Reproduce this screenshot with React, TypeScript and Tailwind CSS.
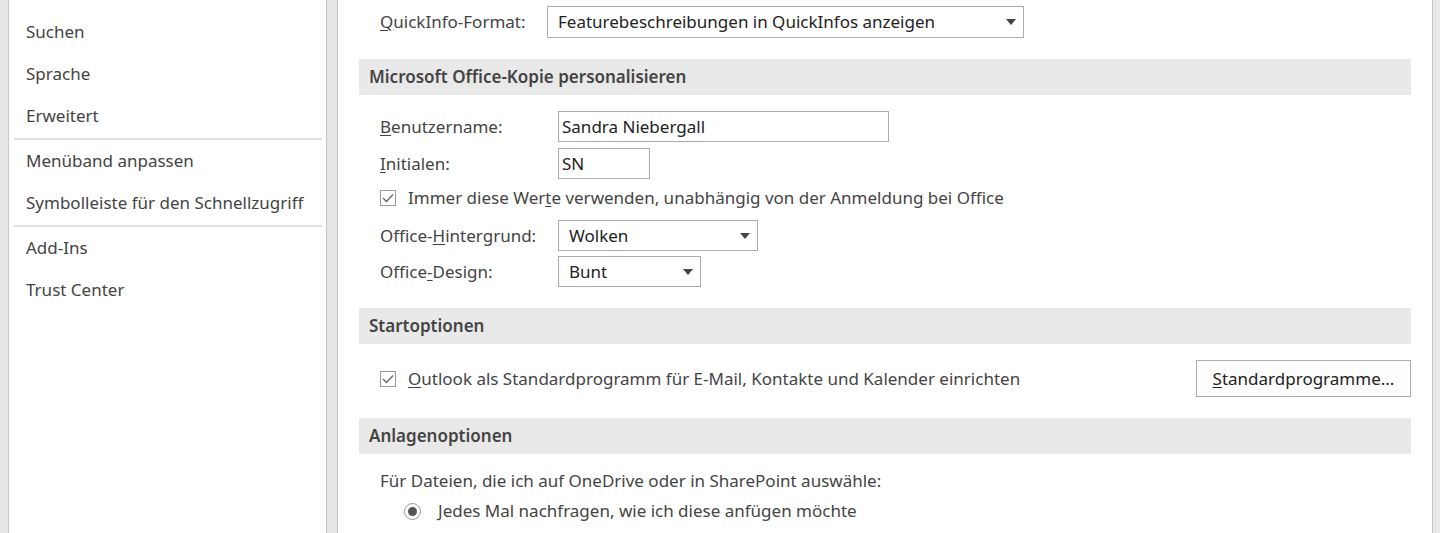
import React from 'react';

const font = { fontFamily: '"Noto Sans", "Open Sans", sans-serif' };

const navGroups: string[][] = [
  ['Aufgaben', 'Suchen', 'Sprache', 'Erweitert'],
  ['Menüband anpassen', 'Symbolleiste für den Schnellzugriff'],
  ['Add-Ins', 'Trust Center'],
];

// label with one underlined access key
const Key: React.FC<{ pre?: string; k: string; post?: string }> = ({ pre = '', k, post = '' }) => (
  <span>
    {pre}
    <span className="underline underline-offset-2">{k}</span>
    {post}
  </span>
);

const Arrow = () => (
  <svg width="10" height="6" viewBox="0 0 10 6" className="shrink-0">
    <path d="M0 0 H10 L5 6 Z" fill="#444" />
  </svg>
);

const Select: React.FC<{ value: string; className: string }> = ({ value, className }) => (
  <div className={`flex items-center justify-between border border-[#ababab] bg-white pl-[10px] pr-[7px] ${className}`}>
    <span className="text-[#222]">{value}</span>
    <Arrow />
  </div>
);

const Check = () => (
  <div className="flex h-[16px] w-[16px] shrink-0 items-center justify-center border border-[#9a9a9a] bg-white">
    <svg width="12" height="10" viewBox="0 0 12 10">
      <path d="M1 5 L4.5 8.5 L11 1.5" fill="none" stroke="#666" strokeWidth="1.3" />
    </svg>
  </div>
);

const Header: React.FC<{ title: string; className?: string }> = ({ title, className = '' }) => (
  <div className={`flex h-[36px] items-center bg-[#e9e9e9] pl-[10px] font-semibold text-[#444] ${className}`}>{title}</div>
);

export default function App() {
  return (
    <div className="flex h-[533px] w-[1440px] overflow-hidden bg-white text-[17px] text-[#444]" style={font}>
      {/* left strip */}
      <div className="w-[8px] shrink-0 bg-[#e6e6e6]" />
      <div className="w-px shrink-0 bg-[#c8c8c8]" />

      {/* navigation */}
      <nav className="w-[317px] shrink-0 pl-[5px] pr-[4px]">
        <div className="mt-[-31px]">
          {navGroups.map((group, gi) => (
            <div key={gi} className={gi > 0 ? 'mt-px border-t-2 border-[#e1e1e1]' : ''}>
              {group.map(item => (
                <div key={item} className="flex h-[42px] items-center pl-[12px] text-[#444]">
                  {item}
                </div>
              ))}
            </div>
          ))}
        </div>
      </nav>

      {/* splitter */}
      <div className="flex w-[12px] shrink-0">
        <div className="w-px bg-[#c6c6c6]" />
        <div className="flex-1 bg-[#e6e6e6]" />
        <div className="w-px bg-[#c6c6c6]" />
      </div>

      {/* content */}
      <main className="flex w-[1094px] shrink-0 flex-col px-[21px]">
        <div className="mt-[6px] flex h-[32px] items-center pl-[21px]">
          <span className="w-[167px]">
            <Key k="Q" post="uickInfo-Format:" />
          </span>
          <Select value="Featurebeschreibungen in QuickInfos anzeigen" className="h-[32px] w-[477px]" />
        </div>

        <Header title="Microsoft Office-Kopie personalisieren" className="mt-[21px]" />

        <div className="mt-[16px] flex h-[31px] items-center pl-[21px]">
          <span className="w-[178px]">
            <Key k="B" post="enutzername:" />
          </span>
          <div className="flex h-[31px] w-[331px] items-center border border-[#ababab] pl-[3px] text-[#222]">Sandra Niebergall</div>
        </div>
        <div className="mt-[6px] flex h-[31px] items-center pl-[21px]">
          <span className="w-[178px]">
            <Key k="I" post="nitialen:" />
          </span>
          <div className="flex h-[31px] w-[92px] items-center border border-[#ababab] pl-[3px] text-[#222]">SN</div>
        </div>
        <div className="mt-[7px] flex h-[24px] items-center gap-[12px] pl-[21px]">
          <Check />
          <Key pre="Immer diese Wer" k="t" post="e verwenden, unabhängig von der Anmeldung bei Office" />
        </div>
        <div className="mt-[10px] flex h-[31px] items-center pl-[21px]">
          <span className="w-[178px]">
            <Key pre="Office-" k="H" post="intergrund:" />
          </span>
          <Select value="Wolken" className="h-[31px] w-[200px]" />
        </div>
        <div className="mt-[5px] flex h-[31px] items-center pl-[21px]">
          <span className="w-[178px]">
            <Key pre="Office" k="-" post="Design:" />
          </span>
          <Select value="Bunt" className="h-[31px] w-[143px]" />
        </div>

        <Header title="Startoptionen" className="mt-[21px]" />

        <div className="mt-[16px] flex h-[37px] items-center justify-between pl-[21px]">
          <div className="flex items-center gap-[12px]">
            <Check />
            <Key k="O" post="utlook als Standardprogramm für E-Mail, Kontakte und Kalender einrichten" />
          </div>
          <button className="flex h-[37px] w-[215px] items-center justify-center border border-[#adadad] bg-[#fdfdfd] text-[#222]">
            <Key k="S" post="tandardprogramme..." />
          </button>
        </div>

        <Header title="Anlagenoptionen" className="mt-[21px]" />

        <div className="mt-[15px] flex h-[24px] items-center pl-[21px]">Für Dateien, die ich auf OneDrive oder in SharePoint auswähle:</div>
        <div className="mt-[6px] flex h-[24px] items-center gap-[17px] pl-[45px]">
          <div className="flex h-[17px] w-[17px] items-center justify-center rounded-full border border-[#9a9a9a] bg-white">
            <div className="h-[9px] w-[9px] rounded-full bg-[#555]" />
          </div>
          <span>Jedes Mal nachfragen, wie ich diese anfügen möchte</span>
        </div>
      </main>

      {/* right strip */}
      <div className="w-px shrink-0 bg-[#c6c6c6]" />
      <div className="flex-1 bg-[#e9e9e9]" />
    </div>
  );
}
